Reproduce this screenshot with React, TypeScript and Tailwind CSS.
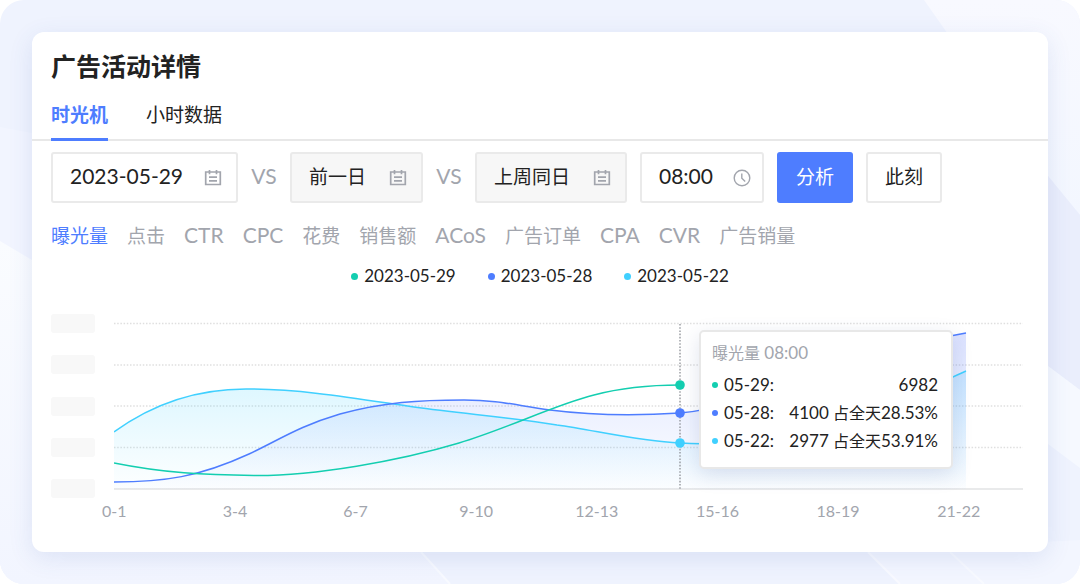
import { useState } from 'react'
import type { ReactNode } from 'react'

const tabs = ['时光机', '小时数据']

const metrics = [
  { name: '曝光量' },
  { name: '点击' },
  { name: 'CTR', latin: true },
  { name: 'CPC', latin: true },
  { name: '花费' },
  { name: '销售额' },
  { name: 'ACoS', latin: true },
  { name: '广告订单' },
  { name: 'CPA', latin: true },
  { name: 'CVR', latin: true },
  { name: '广告销量' },
]

const legend = [
  { date: '2023-05-29', dot: 'bg-[#13ceb0]' },
  { date: '2023-05-28', dot: 'bg-[#4e7dff]' },
  { date: '2023-05-22', dot: 'bg-[#40d0ff]' },
]

const tooltipRows = [
  { label: '05-29:', value: '6982', dot: 'bg-[#13ceb0]' },
  { label: '05-28:', value: '4100', share: '28.53%', dot: 'bg-[#4e7dff]' },
  { label: '05-22:', value: '2977', share: '53.91%', dot: 'bg-[#40d0ff]' },
]

const hours = ['0-1', '3-4', '6-7', '9-10', '12-13', '15-16', '18-19', '21-22']

const CHART_WIDTH = 909
const CHART_HEIGHT = 184
const BASE = 175

const cyanLine =
  'M0 118C37 91 82 75 132 75C190 75 245 85 300 93C350 100 395 103 443 111C480 116 522 127 566 129C640 134 740 110 800 82C820 72 836 64 852 57'
const blueLine =
  'M0 168C50 168 85 163 135 140C165 126 185 112 226 100C270 88 305 86 350 86C385 86 400 91 436 96C475 101 520 102 566 99C640 93 730 40 852 19'
const greenLine =
  'M0 149C50 159 90 161 140 161.500C200 162 285 147 345 129C395 114 440 91 480 81C510 73 535 71 566 71'

export default function App() {
  const [activeTab, setActiveTab] = useState('时光机')
  const [activeMetric, setActiveMetric] = useState('曝光量')

  return (
    <div className="relative min-h-screen overflow-hidden rounded-3xl bg-[#eff3fe] p-8 font-['Lato','Noto_Sans_CJK_SC',sans-serif] text-[#222]">
      <Backdrop />
      <main className="relative rounded-xl bg-white pb-[29px] shadow-[0_6px_24px_rgba(60,90,170,0.12)]">
        <h1 className="px-[19px] pt-[16px] text-[25px] leading-[36px] font-bold">广告活动详情</h1>

        {/* Tabs */}
        <div className="mt-[8px] flex gap-[38px] border-b-2 border-[#e8e8e8] px-[19px]">
          {tabs.map((tab) => (
            <button
              key={tab}
              onClick={() => setActiveTab(tab)}
              className={`-mb-[2px] h-[49px] border-b-3 text-[19px] leading-[28px] ${activeTab === tab ? 'border-[#4e7dff] font-bold text-[#4e7dff]' : 'border-transparent'}`}
            >
              {tab}
            </button>
          ))}
        </div>

        <div className="px-[19px]">
          {/* Filters */}
          <form className="mt-[11px] flex items-center gap-[13px]" onSubmit={(e) => e.preventDefault()}>
            <Field label="日期" value="2023-05-29" className="w-[187px] pr-[14px] text-[21px] [&>input]:pb-[3px]" icon={<CalendarIcon />} />
            <Versus />
            <Field label="对比日期一" value="前一日" className="w-[133px] bg-[#f7f7f7] pr-[14px] text-[19px]" icon={<CalendarIcon />} />
            <Versus />
            <Field label="对比日期二" value="上周同日" className="w-[152px] bg-[#f7f7f7] pr-[14px] text-[19px]" icon={<CalendarIcon />} />
            <Field label="时间" value="08:00" className="w-[124px] pr-[11px] text-[21px] [&>input]:pb-[3px]" icon={<ClockIcon />} />
            <button type="submit" className="h-[51px] w-[76px] rounded-[3px] bg-[#4e7dff] text-[19px] text-white">
              分析
            </button>
            <button type="button" className="h-[51px] w-[76px] rounded-[3px] border-2 border-[#eaeaea] text-[19px]">
              此刻
            </button>
          </form>

          {/* Metrics */}
          <div className="mt-[18px] flex h-[28px] items-baseline gap-[19px] leading-[28px] text-[#a2a5ad]">
            {metrics.map((metric) => (
              <button
                key={metric.name}
                onClick={() => setActiveMetric(metric.name)}
                className={`whitespace-nowrap ${metric.latin ? 'text-[21px]' : 'text-[19px]'} ${activeMetric === metric.name ? 'text-[#4e7dff]' : ''}`}
              >
                {metric.name}
              </button>
            ))}
          </div>

          {/* Legend */}
          <ul className="mt-[15px] flex justify-center gap-[32px] text-[17px] leading-[24px]">
            {legend.map((item) => (
              <li key={item.date} className="flex items-center gap-[6px]">
                <span className={`size-[7px] rounded-full ${item.dot}`} />
                {item.date}
              </li>
            ))}
          </ul>

          {/* Chart */}
          <div className="mt-[26px] flex gap-[19px] pr-[6px]">
            <div className="flex w-[44px] shrink-0 flex-col justify-between">
              {[0, 1, 2, 3, 4].map((n) => (
                <span key={n} className="h-[19px] rounded-[3px] bg-[#f8f8f8]" />
              ))}
            </div>
            <div className="relative min-w-0 flex-1">
              <TrendChart />
              <Tooltip />
            </div>
          </div>
          <div className="mt-[1px] grid grid-cols-8 pr-[10px] pl-[3px] text-center text-[16px] leading-[24px] text-[#a2a5ad]">
            {hours.map((hour) => (
              <span key={hour}>{hour}</span>
            ))}
          </div>
        </div>
      </main>
    </div>
  )
}

function Field({ label, value, className, icon }: { label: string; value: string; className: string; icon: ReactNode }) {
  return (
    <label className={`flex h-[51px] items-center rounded-[3px] border-2 border-[#eaeaea] pl-[17px] ${className}`}>
      <input aria-label={label} defaultValue={value} className="w-full min-w-0 flex-1 bg-transparent outline-none" />
      {icon}
    </label>
  )
}

function Versus() {
  return <span className="w-[26px] pb-[3px] text-center text-[21px] text-[#a2a5ad]">VS</span>
}

function CalendarIcon() {
  return (
    <svg viewBox="0 0 18 18" className="size-[18px] shrink-0" fill="none" stroke="#a2a5ad" strokeWidth="1.700">
      <path d="M1.700 3H16.300V15.500H1.700Z" />
      <path d="M5.500 1V5.200M12.500 1V5.200M5 8.200H13M5 11.800H13" />
    </svg>
  )
}

function ClockIcon() {
  return (
    <svg viewBox="0 0 18 18" className="size-[18px] shrink-0" fill="none" stroke="#a2a5ad" strokeWidth="1.400">
      <circle cx="9" cy="9" r="7.800" />
      <path d="M8.800 4.500V9.200L12.200 12.600" />
    </svg>
  )
}

function TrendChart() {
  return (
    <svg viewBox={`0 0 ${CHART_WIDTH} ${CHART_HEIGHT}`} className="block w-full" fill="none" role="img" aria-label="曝光量趋势">
      <defs>
        <linearGradient id="cyanFill" x1="0" y1="57" x2="0" y2={BASE} gradientUnits="userSpaceOnUse">
          <stop stopColor="#40d0ff" stopOpacity="0.2" />
          <stop offset="1" stopColor="#40d0ff" stopOpacity="0.01" />
        </linearGradient>
        <linearGradient id="blueFill" x1="0" y1="19" x2="0" y2={BASE} gradientUnits="userSpaceOnUse">
          <stop stopColor="#4e6dff" stopOpacity="0.2" />
          <stop offset="1" stopColor="#4e7dff" stopOpacity="0.01" />
        </linearGradient>
      </defs>
      {[9.5, 51, 92, 133.5].map((y) => (
        <path key={y} d={`M0 ${y}H${CHART_WIDTH}`} stroke="#dfdfdf" strokeWidth="1.500" strokeDasharray="1.500 1.700" />
      ))}
      <path d={`M0 ${BASE}H${CHART_WIDTH}`} stroke="#e2e3e5" strokeWidth="1.500" />
      <path d={`${cyanLine}V${BASE}H0Z`} fill="url(#cyanFill)" />
      <path d={`${blueLine}V${BASE}H0Z`} fill="url(#blueFill)" />
      <path d={cyanLine} stroke="#40d0ff" strokeWidth="1.500" />
      <path d={blueLine} stroke="#4e7dff" strokeWidth="1.500" />
      <path d={greenLine} stroke="#13ceb0" strokeWidth="1.500" />
      <path d={`M566 10V${BASE}`} stroke="#8d9096" strokeWidth="1.300" strokeDasharray="1.600 1.600" />
      <circle cx="566" cy="71" r="4.800" fill="#13ceb0" />
      <circle cx="566" cy="99" r="4.800" fill="#4e7dff" />
      <circle cx="566" cy="129" r="4.800" fill="#40d0ff" />
    </svg>
  )
}

function Tooltip() {
  return (
    <div
      className="absolute top-[16px] w-[254px] rounded-[5px] border-2 border-[#e8e8e8] bg-white px-[11px] pt-[7px] pb-[12px] text-[17px] leading-[28px] shadow-[0_6px_20px_rgba(60,90,150,0.16)]"
      style={{ left: `${(585 / CHART_WIDTH) * 100}%` }}
    >
      <p className="mb-[4px] text-[#a2a5ad]">
        <span className="text-[16px]">曝光量</span> 08:00
      </p>
      {tooltipRows.map((row) => (
        <div key={row.label} className="flex items-center gap-[6px] pr-[2px]">
          <span className={`size-[6px] rounded-full ${row.dot}`} />
          <span className="flex-1">{row.label}</span>
          <span className="whitespace-nowrap">
            {row.value}
            {row.share && <span className="text-[16px]"> 占全天</span>}
            {row.share}
          </span>
        </div>
      ))}
    </div>
  )
}

function Backdrop() {
  return (
    <svg viewBox="0 0 1080 584" preserveAspectRatio="none" className="absolute inset-0 size-full" aria-hidden="true">
      <defs>
        <linearGradient id="leftGlow" x1="0" y1="241" x2="0" y2="584" gradientUnits="userSpaceOnUse">
          <stop stopColor="#fafcff" />
          <stop offset="1" stopColor="#f2f5ff" />
        </linearGradient>
        <linearGradient id="rightGlow" x1="0" y1="0" x2="0" y2="215" gradientUnits="userSpaceOnUse">
          <stop stopColor="#f8f9ff" />
          <stop offset="1" stopColor="#f3f7ff" />
        </linearGradient>
      </defs>
      <path d="M0 127L200 165V584H0Z" fill="#f2f5ff" />
      <path d="M0 241L200 360L421 552L450 584H0Z" fill="url(#leftGlow)" />
      <path d="M924 0H1080V215L1048 176Z" fill="url(#rightGlow)" />
      <path d="M1048 176L1080 215V390L1000 330Z" fill="#eaeefc" />
      <path d="M1000 330L1080 390V468L1000 408Z" fill="#f6f9ff" />
      <path d="M868 552L900 584H1080V540Z" fill="#f3f6ff" />
      <path d="M421 552L450 584M868 552L900 584M950 552L984 584" stroke="#f8faff" strokeWidth="2" />
    </svg>
  )
}
